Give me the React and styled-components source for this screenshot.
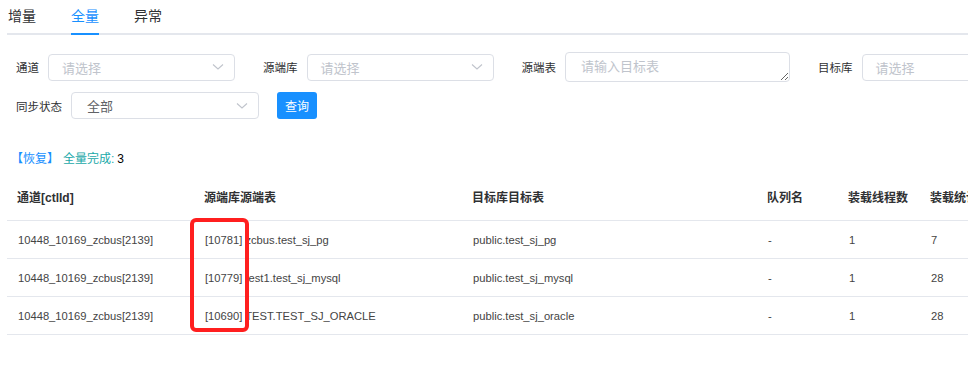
import React from "react";
import styled, { createGlobalStyle } from "styled-components";

const Global = createGlobalStyle`
  html, body { margin: 0; padding: 0; background: #fff; overflow: hidden; }
  body { font-family: "Liberation Sans", "Noto Sans CJK SC", sans-serif; color: #303133; }
  * { box-sizing: border-box; }
`;

const Page = styled.div`
  width: 968px;
  height: 365px;
  overflow: hidden;
`;

const TabNav = styled.div`
  margin-left: 7px;
  display: flex;
  gap: 35px;
  padding-left: 1px;
  border-bottom: 2px solid #e4e7ed;
`;

const Tab = styled.div`
  height: 35px;
  margin-bottom: -2px;
  padding-bottom: 4px;
  display: flex;
  align-items: center;
  font-size: 14px;
  color: ${(p) => (p.$active ? "#1890ff" : "#303133")};
  border-bottom: 2px solid ${(p) => (p.$active ? "#1890ff" : "transparent")};
`;

const Filters = styled.div`
  padding: 17px 0 0 16px;
  display: flex;
  flex-direction: column;
  gap: 10px;
`;

const FilterRow = styled.div`
  display: flex;
  align-items: center;
  height: ${(p) => p.$h || 27}px;
  white-space: nowrap;
`;

const Item = styled.div`
  display: flex;
  align-items: center;
  margin-right: ${(p) => (p.$mr != null ? p.$mr : 28)}px;
  flex-shrink: 0;
`;

const Label = styled.span`
  font-size: 11.5px;
  color: #303133;
  margin-right: 9px;
`;

const SelectBox = styled.div`
  width: ${(p) => p.$w || 187}px;
  height: 27px;
  border: 1px solid #dcdfe6;
  border-radius: 4px;
  display: flex;
  align-items: center;
  justify-content: space-between;
  padding: 0 10px 0 ${(p) => (p.$filled ? 15 : 13)}px;
  font-size: 13px;
  color: ${(p) => (p.$filled ? "#606266" : "#c0c4cc")};
  flex-shrink: 0;
`;

const Area = styled.textarea`
  width: 225px;
  height: 30px;
  border: 1px solid #dcdfe6;
  border-radius: 4px;
  padding: 5px 15px;
  font-family: "Liberation Sans", "Noto Sans CJK SC", sans-serif;
  font-size: 13px;
  line-height: 18px;
  color: #606266;
  resize: vertical;
  outline: none;
  &::placeholder { color: #c0c4cc; }
`;

const Button = styled.button`
  width: 40px;
  height: 27px;
  border: none;
  border-radius: 3px;
  background: #1890ff;
  color: #fff;
  font-family: "Liberation Sans", "Noto Sans CJK SC", sans-serif;
  font-size: 12px;
  padding: 0;
`;

const Status = styled.div`
  margin-top: 30px;
  padding-left: 11px;
  font-size: 12px;
  line-height: 20px;
  display: flex;
  align-items: center;
`;

const Link = styled.span`
  color: #1890ff;
  margin-right: 4px;
`;

const Teal = styled.span`
  color: #1aa9a9;
`;

const Count = styled.span`
  color: #000;
  margin-left: 3px;
`;

const TableWrap = styled.div`
  position: relative;
  margin: 8px 0 0 7px;
`;

const Table = styled.div`
  display: grid;
  grid-template-columns: 187px 268px 295px 81px 82px 120px;
  width: 1033px;
`;

const HeadCell = styled.div`
  height: 44px;
  padding: 0 0 4px 10px;
  display: flex;
  align-items: center;
  font-size: 12px;
  font-weight: bold;
  color: #303133;
  border-bottom: 1px solid #e4e7ed;
  white-space: nowrap;
`;

const Cell = styled.div`
  height: 38px;
  padding: 1px 0 0 11px;
  display: flex;
  align-items: center;
  font-size: 11.2px;
  color: #444;
  border-bottom: 1px solid #e4e7ed;
  white-space: nowrap;
`;

const Highlight = styled.div`
  position: absolute;
  left: 183px;
  top: 41px;
  width: 59px;
  height: 114px;
  border: 4px solid #ff1f1f;
  border-radius: 6px;
  pointer-events: none;
`;

const Chevron = () => (
  <svg width="12" height="8" viewBox="0 0 12 8">
    <polyline points="1,1.5 6,6 11,1.5" fill="none" stroke="#c0c4cc" strokeWidth="1.1" />
  </svg>
);

const Select = ({ value, placeholder, w }) => (
  <SelectBox $w={w} $filled={!!value}>
    <span>{value || placeholder}</span>
    <Chevron />
  </SelectBox>
);

const rows = [
  ["10448_10169_zcbus[2139]", "[10781] zcbus.test_sj_pg", "public.test_sj_pg", "-", "1", "7"],
  ["10448_10169_zcbus[2139]", "[10779] test1.test_sj_mysql", "public.test_sj_mysql", "-", "1", "28"],
  ["10448_10169_zcbus[2139]", "[10690] TEST.TEST_SJ_ORACLE", "public.test_sj_oracle", "-", "1", "28"],
];

const heads = ["通道[ctlId]", "源端库源端表", "目标库目标表", "队列名", "装载线程数", "装载统计"];

export default function App() {
  return (
    <Page>
      <Global />
      <TabNav>
        <Tab>增量</Tab>
        <Tab $active>全量</Tab>
        <Tab>异常</Tab>
      </TabNav>
      <Filters>
        <FilterRow $h={30}>
          <Item>
            <Label>通道</Label>
            <Select placeholder="请选择" />
          </Item>
          <Item>
            <Label>源端库</Label>
            <Select placeholder="请选择" />
          </Item>
          <Item>
            <Label>源端表</Label>
            <Area rows={1} placeholder="请输入目标表" />
          </Item>
          <Item>
            <Label>目标库</Label>
            <Select placeholder="请选择" />
          </Item>
        </FilterRow>
        <FilterRow>
          <Item $mr={18}>
            <Label>同步状态</Label>
            <Select value="全部" w={188} />
          </Item>
          <Button>查询</Button>
        </FilterRow>
      </Filters>
      <Status>
        <Link>【恢复】</Link>
        <Teal>全量完成:</Teal>
        <Count>3</Count>
      </Status>
      <TableWrap>
        <Table>
          {heads.map((h) => (
            <HeadCell key={h}>{h}</HeadCell>
          ))}
          {rows.map((r, i) =>
            r.map((c, j) => <Cell key={i + "-" + j}>{c}</Cell>)
          )}
        </Table>
        <Highlight />
      </TableWrap>
    </Page>
  );
}
